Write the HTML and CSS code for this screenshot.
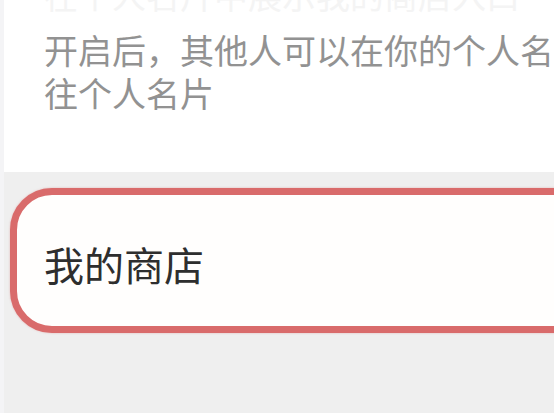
FILE: index.html
```
<!DOCTYPE html>
<html lang="zh">
<head>
    <meta charset="UTF-8">
    <meta name="viewport" content="width=device-width, initial-scale=1.0">
    <title>我的商店</title>
    <link rel="stylesheet" href="styles.css">
</head>
<body>
    <div class="screen">
        <div class="card">
            <div class="card-title">在个人名片中展示我的商店入口</div>
            <p class="card-desc">开启后，其他人可以在你的个人名片中看到，点击前<br>往个人名片</p>
        </div>

        <div class="group">
            <div class="store-item">我的商店</div>
        </div>
    </div>
</body>
</html>
```
FILE: styles.css
```
html, body {
    margin: 0;
    padding: 0;
    overflow: hidden;
}
body {
    font-family: "Noto Sans CJK SC", "Noto Sans", sans-serif;
    background: #efefef;
    width: 554px;
    height: 413px;
}
.screen {
    border-left: 4px solid #f4f4f6;
    height: 413px;
}
.card {
    background: #fff;
    height: 172px;
    padding-left: 40px;
    overflow: hidden;
}
.card-title {
    font-size: 34px;
    line-height: 43px;
    color: #f4f4f4;
    white-space: nowrap;
    margin-top: -27px;
}
.card-desc {
    font-size: 34px;
    line-height: 43px;
    color: #929292;
    margin: 12px 0 0;
    white-space: nowrap;
}
.group {
    padding-top: 16px;
}
.store-item {
    margin-left: 6px;
    margin-right: -60px;
    background: #fffefd;
    border: 7px solid #d96b6b;
    border-radius: 42px;
    box-shadow: 0 0 2px rgba(217, 107, 107, 0.5);
    padding: 49px 0 42px 27px;
    font-size: 40px;
    line-height: 40px;
    color: #2e2e2e;
}
```
